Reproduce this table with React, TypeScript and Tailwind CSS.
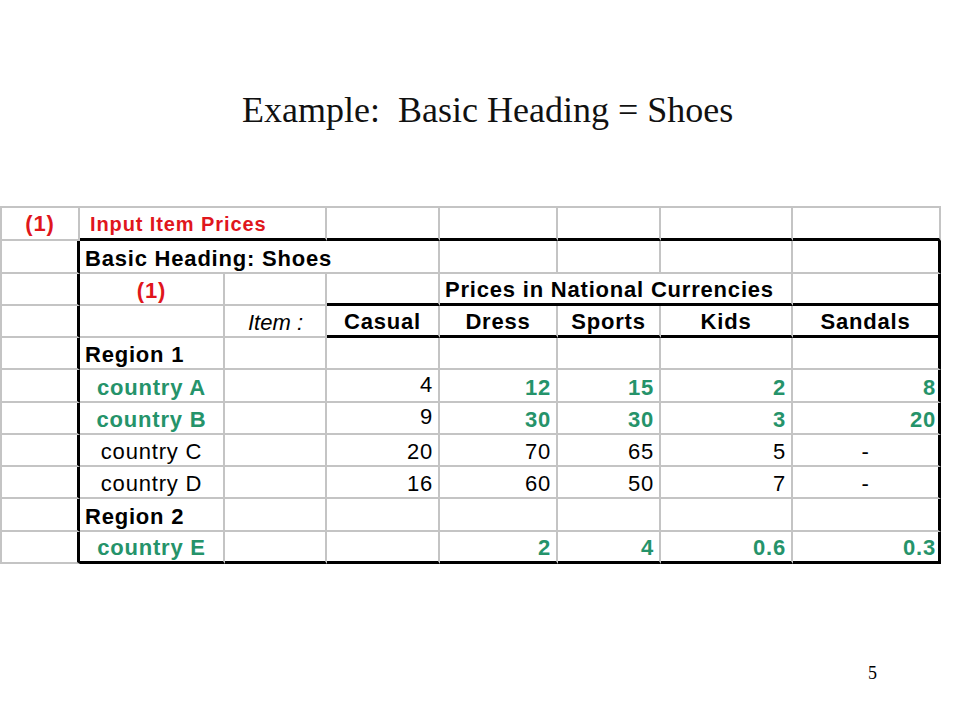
import React from "react";

type B = "g" | "k" | "n";

const GREEN = "text-[#25936a]";
const RED = "text-[#e0161c]";

function Cell({
  children,
  r = "g",
  b = "g",
  span = 1,
  cls = "",
  size = "text-[22px] leading-[22px]",
  pb = "pb-[2px]",
  tr = "tracking-[0.8px]",
}: {
  children?: React.ReactNode;
  r?: B;
  b?: B;
  span?: 1 | 2 | 3;
  cls?: string;
  size?: string;
  pb?: string;
  tr?: string;
}) {
  const rc =
    r === "k"
      ? "border-r-[3px] border-r-black"
      : r === "g"
      ? "border-r-2 border-r-[#c4c4c4]"
      : "";
  const bc =
    b === "k"
      ? "border-b-[3px] border-b-black"
      : b === "g"
      ? "border-b-2 border-b-[#c4c4c4]"
      : "";
  const sc = span === 3 ? "col-span-3" : span === 2 ? "col-span-2" : "";
  return (
    <div
      className={`flex items-end overflow-visible whitespace-nowrap ${pb} ${size} ${tr} ${rc} ${bc} ${sc} ${cls}`}
    >
      {children}
    </div>
  );
}

const center = "justify-center";
const left = "justify-start pl-[5px]";
const right = "justify-end pr-[5px]";
const rightEdge = "justify-end pr-[2px]";
const bold = "font-bold";

export default function App() {
  return (
    <div className="w-[960px] h-[720px] bg-white overflow-hidden font-['Liberation_Sans',Arial,sans-serif] text-black">
      <div className="mt-[92px] h-[36px] pl-[242px] font-['Liberation_Serif','Times_New_Roman',serif] text-[36px] leading-[36px] whitespace-pre text-[#111]">
        {"Example:  Basic Heading = Shoes"}
      </div>

      <div className="mt-[78px] grid grid-cols-[78px_145px_102px_113px_118px_103px_132px_148px] grid-rows-[33px_33px_32px_32px_32px_33px_32px_32px_32px_33px_32px] w-max border-t-2 border-l-2 border-[#c4c4c4]">
        {/* Row 1 */}
        <Cell pb="pb-[4px]" cls={`${center} ${bold} ${RED}`}>(1)</Cell>
        <Cell
          span={2}
          b="k"
          size="text-[20px] leading-[20px]"
          pb="pb-[4px]"
          tr="tracking-[0.9px]"
          cls={`justify-start pl-[10px] ${bold} ${RED}`}
        >
          Input Item Prices
        </Cell>
        <Cell b="k" />
        <Cell b="k" />
        <Cell b="k" />
        <Cell b="k" />
        <Cell b="k" />

        {/* Row 2 */}
        <Cell r="k" />
        <Cell span={3} cls={`${left} ${bold}`}>
          Basic Heading: Shoes
        </Cell>
        <Cell />
        <Cell />
        <Cell />
        <Cell r="k" />

        {/* Row 3 */}
        <Cell r="k" />
        <Cell cls={`${center} ${bold} ${RED}`}>(1)</Cell>
        <Cell />
        <Cell b="k" />
        <Cell span={3} b="k" cls={`${left} ${bold}`}>
          Prices in National Currencies
        </Cell>
        <Cell r="k" b="k" />

        {/* Row 4 */}
        <Cell r="k" />
        <Cell />
        <Cell tr="tracking-normal" cls="justify-end pr-[22px] italic">
          Item :
        </Cell>
        <Cell b="k" cls={`${center} ${bold}`}>Casual</Cell>
        <Cell b="k" cls={`${center} ${bold}`}>Dress</Cell>
        <Cell b="k" cls={`${center} ${bold}`}>Sports</Cell>
        <Cell b="k" cls={`${center} ${bold}`}>Kids</Cell>
        <Cell r="k" b="k" cls={`${center} ${bold}`}>Sandals</Cell>

        {/* Row 5 */}
        <Cell r="k" />
        <Cell cls={`${left} ${bold}`}>Region 1</Cell>
        <Cell />
        <Cell />
        <Cell />
        <Cell />
        <Cell />
        <Cell r="k" />

        {/* Row 6 */}
        <Cell r="k" />
        <Cell cls={`${center} ${bold} ${GREEN}`}>country A</Cell>
        <Cell />
        <Cell pb="pb-[5px]" cls={right}>4</Cell>
        <Cell cls={`${right} ${bold} ${GREEN}`}>12</Cell>
        <Cell cls={`${right} ${bold} ${GREEN}`}>15</Cell>
        <Cell cls={`${right} ${bold} ${GREEN}`}>2</Cell>
        <Cell r="k" cls={`${rightEdge} ${bold} ${GREEN}`}>8</Cell>

        {/* Row 7 */}
        <Cell r="k" />
        <Cell cls={`${center} ${bold} ${GREEN}`}>country B</Cell>
        <Cell />
        <Cell pb="pb-[5px]" cls={right}>9</Cell>
        <Cell cls={`${right} ${bold} ${GREEN}`}>30</Cell>
        <Cell cls={`${right} ${bold} ${GREEN}`}>30</Cell>
        <Cell cls={`${right} ${bold} ${GREEN}`}>3</Cell>
        <Cell r="k" cls={`${rightEdge} ${bold} ${GREEN}`}>20</Cell>

        {/* Row 8 */}
        <Cell r="k" />
        <Cell cls={center}>country C</Cell>
        <Cell />
        <Cell cls={right}>20</Cell>
        <Cell cls={right}>70</Cell>
        <Cell cls={right}>65</Cell>
        <Cell cls={right}>5</Cell>
        <Cell r="k" cls={center}>-</Cell>

        {/* Row 9 */}
        <Cell r="k" />
        <Cell cls={center}>country D</Cell>
        <Cell />
        <Cell cls={right}>16</Cell>
        <Cell cls={right}>60</Cell>
        <Cell cls={right}>50</Cell>
        <Cell cls={right}>7</Cell>
        <Cell r="k" cls={center}>-</Cell>

        {/* Row 10 */}
        <Cell r="k" />
        <Cell cls={`${left} ${bold}`}>Region 2</Cell>
        <Cell />
        <Cell />
        <Cell />
        <Cell />
        <Cell />
        <Cell r="k" />

        {/* Row 11 */}
        <Cell r="k" />
        <Cell b="k" cls={`${center} ${bold} ${GREEN}`}>country E</Cell>
        <Cell b="k" />
        <Cell b="k" />
        <Cell b="k" cls={`${right} ${bold} ${GREEN}`}>2</Cell>
        <Cell b="k" cls={`${right} ${bold} ${GREEN}`}>4</Cell>
        <Cell b="k" cls={`${right} ${bold} ${GREEN}`}>0.6</Cell>
        <Cell r="k" b="k" cls={`${rightEdge} ${bold} ${GREEN}`}>0.3</Cell>
      </div>

      <div className="mt-[100px] pl-[868px] font-['Liberation_Serif','Times_New_Roman',serif] text-[18px] leading-[18px]">
        5
      </div>
    </div>
  );
}
